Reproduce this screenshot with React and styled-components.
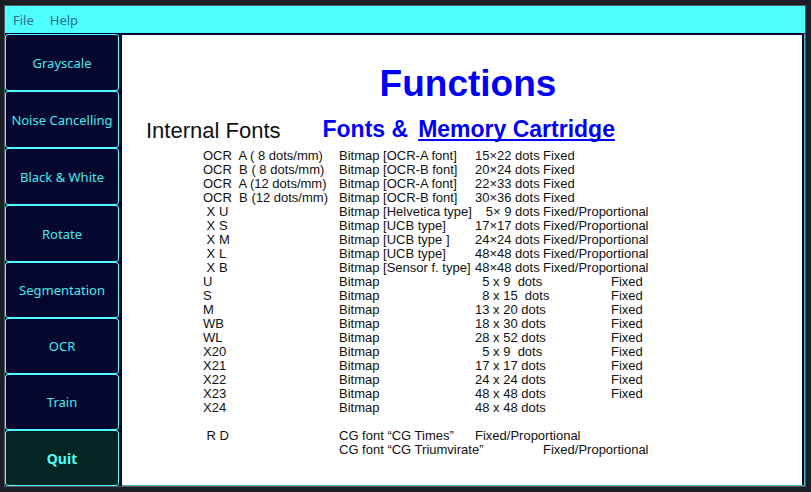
import React from "react";
import styled, { createGlobalStyle } from "styled-components";

const GlobalStyle = createGlobalStyle`
  * { box-sizing: border-box; }
  body {
    margin: 0;
    background: #1b1e26;
    font-family: "Noto Sans", sans-serif;
  }
`;

const Desktop = styled.div`
  display: flex;
  min-height: 100vh;
  padding: 5px 5px 5px 4px;
`;

const AppWindow = styled.div`
  flex: 1;
  display: flex;
  flex-direction: column;
  min-width: 0;
  border: 1px solid #545a62;
  background: #050730;
`;

const MenuBar = styled.nav`
  display: flex;
  gap: 16px;
  height: 27px;
  padding: 0 8px;
  background: #4dffff;
`;

const MenuItem = styled.button`
  padding: 0;
  border: 0;
  background: none;
  color: #2d6a94;
  font: 13px/28px "Noto Sans", sans-serif;
`;

const Workspace = styled.div`
  flex: 1;
  display: flex;
  gap: 3px;
  padding-top: 1px;
`;

const Sidebar = styled.aside`
  flex: none;
  width: 114px;
  display: grid;
  grid-template-rows: repeat(4, 57fr) repeat(4, 56fr);
`;

const ToolButton = styled.button`
  padding: 0;
  border: 1px solid #4dffff;
  border-radius: 3px;
  background: ${(p) => (p.$strong ? "#052523" : "#050730")};
  color: ${(p) => (p.$strong ? "#4dffff" : "#46eaea")};
  font-family: "Noto Sans", sans-serif;
  font-size: ${(p) => (p.$strong ? "14px" : "13px")};
  font-weight: ${(p) => (p.$strong ? 700 : 400)};
  white-space: nowrap;
`;

const Viewer = styled.main`
  flex: 1;
  min-width: 0;
  padding: 1px 2px 0 0;
  border-right: 1px solid #43b4b8;
  border-bottom: 1px solid #43b4b8;
  display: flex;
`;

const Page = styled.article`
  flex: 1;
  min-width: 0;
  padding: 29px 12px 0 24px;
  background: #fff;
  color: #111;
  font-family: "Liberation Sans", Arial, sans-serif;
`;

const Title = styled.h1`
  margin: 0;
  color: #0000f5;
  font-size: 37px;
  line-height: 40px;
  text-align: center;
`;

const Headings = styled.div`
  display: flex;
  align-items: flex-end;
  gap: 42px;
  margin-top: 10px;
  white-space: nowrap;
`;

const SectionHeading = styled.h2`
  margin: 0;
  font-size: 22px;
  font-weight: 400;
  line-height: 30px;
`;

const CartridgeHeading = styled.h2`
  display: flex;
  gap: 10px;
  margin: 0;
  padding-bottom: 2px;
  color: #0000f5;
  font-size: 23px;
  line-height: 30px;
`;

const Underlined = styled.span`
  text-decoration: underline;
  text-decoration-thickness: 2px;
  text-underline-offset: 2px;
  text-decoration-skip-ink: none;
`;

const FontTable = styled.table`
  width: calc(100% - 57px);
  margin: 3px 0 0 57px;
  table-layout: fixed;
  border-collapse: collapse;
  font-size: 13px;
  line-height: 14px;
`;

const Column = styled.col`
  width: ${(p) => p.$width};
`;

const Cell = styled.td`
  height: 14px;
  padding: 0;
  white-space: pre;
`;

const tools = [
  "Grayscale",
  "Noise Cancelling",
  "Black & White",
  "Rotate",
  "Segmentation",
  "OCR",
  "Train",
];

const columns = ["136px", "136px", "68px", "68px", "auto"];

const rows = [
  ["OCR  A ( 8 dots/mm)", "Bitmap [OCR-A font]", "15×22 dots", "Fixed", ""],
  ["OCR  B ( 8 dots/mm)", "Bitmap [OCR-B font]", "20×24 dots", "Fixed", ""],
  ["OCR  A (12 dots/mm)", "Bitmap [OCR-A font]", "22×33 dots", "Fixed", ""],
  ["OCR  B (12 dots/mm)", "Bitmap [OCR-B font]", "30×36 dots", "Fixed", ""],
  [" X U", "Bitmap [Helvetica type]", "   5× 9 dots", "Fixed/Proportional", ""],
  [" X S", "Bitmap [UCB type]", "17×17 dots", "Fixed/Proportional", ""],
  [" X M", "Bitmap [UCB type ]", "24×24 dots", "Fixed/Proportional", ""],
  [" X L", "Bitmap [UCB type]", "48×48 dots", "Fixed/Proportional", ""],
  [" X B", "Bitmap [Sensor f. type]", "48×48 dots", "Fixed/Proportional", ""],
  ["U", "Bitmap", "  5 x 9  dots", "", "Fixed"],
  ["S", "Bitmap", "  8 x 15  dots", "", "Fixed"],
  ["M", "Bitmap", "13 x 20 dots", "", "Fixed"],
  ["WB", "Bitmap", "18 x 30 dots", "", "Fixed"],
  ["WL", "Bitmap", "28 x 52 dots", "", "Fixed"],
  ["X20", "Bitmap", "  5 x 9  dots", "", "Fixed"],
  ["X21", "Bitmap", "17 x 17 dots", "", "Fixed"],
  ["X22", "Bitmap", "24 x 24 dots", "", "Fixed"],
  ["X23", "Bitmap", "48 x 48 dots", "", "Fixed"],
  ["X24", "Bitmap", "48 x 48 dots", "", ""],
  ["", "", "", "", ""],
  [" R D", "CG font “CG Times”", "Fixed/Proportional", "", ""],
  ["", "CG font “CG Triumvirate”", "", "Fixed/Proportional", ""],
];

export default function App() {
  return (
    <>
      <GlobalStyle />
      <Desktop>
        <AppWindow>
          <MenuBar>
            <MenuItem type="button">File</MenuItem>
            <MenuItem type="button">Help</MenuItem>
          </MenuBar>
          <Workspace>
            <Sidebar>
              {tools.map((tool) => (
                <ToolButton key={tool} type="button">
                  {tool}
                </ToolButton>
              ))}
              <ToolButton type="button" $strong>
                Quit
              </ToolButton>
            </Sidebar>
            <Viewer>
              <Page>
                <Title>Functions</Title>
                <Headings>
                  <SectionHeading>Internal Fonts</SectionHeading>
                  <CartridgeHeading>
                    <span>Fonts &amp;</span>
                    <Underlined>Memory Cartridge</Underlined>
                  </CartridgeHeading>
                </Headings>
                <FontTable>
                  <colgroup>
                    {columns.map((width, i) => (
                      <Column key={i} $width={width} />
                    ))}
                  </colgroup>
                  <tbody>
                    {rows.map((row, r) => (
                      <tr key={r}>
                        {row.map((text, c) => (
                          <Cell key={c}>{text}</Cell>
                        ))}
                      </tr>
                    ))}
                  </tbody>
                </FontTable>
              </Page>
            </Viewer>
          </Workspace>
        </AppWindow>
      </Desktop>
    </>
  );
}
